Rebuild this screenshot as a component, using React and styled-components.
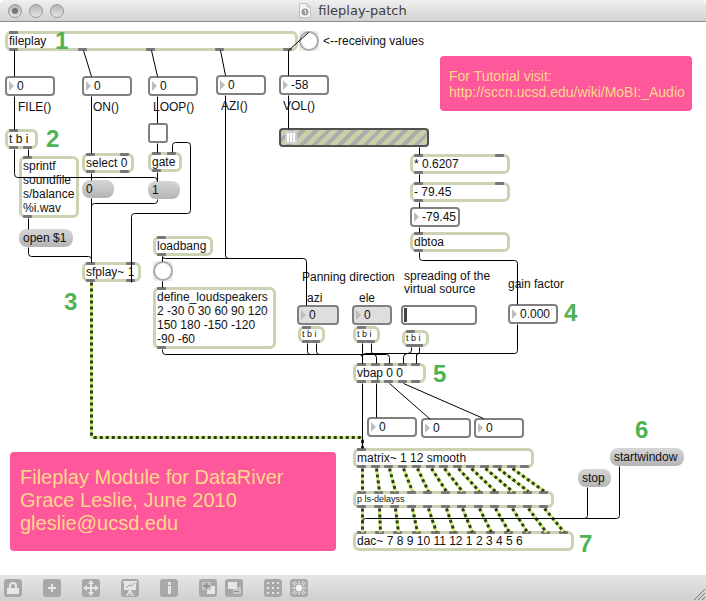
import React from "react";
import styled, { createGlobalStyle } from "styled-components";

const GlobalStyle = createGlobalStyle`
  * { box-sizing: border-box; }
  body {
    margin: 0;
    background: #fff;
    color: #111;
    font: 12px/14px "Liberation Sans", Arial, sans-serif;
  }
  button, input { font: inherit; color: inherit; margin: 0; }
`;

const Window = styled.main`
  display: flex;
  flex-direction: column;
  height: 100vh;
  background: #fff;
`;

const TitleBar = styled.header`
  display: grid;
  grid-template-columns: 1fr auto 1fr;
  align-items: center;
  height: 22px;
  flex: none;
  padding: 0 8px;
  background: linear-gradient(#efefef, #d2d2d2);
  border-bottom: 1px solid #8c8c8c;
  border-radius: 5px 5px 0 0;
`;

const Lights = styled.div`
  display: flex;
  gap: 7px;
`;

const Light = styled.button`
  display: grid;
  place-items: center;
  width: 14px;
  height: 14px;
  padding: 0;
  border: 1px solid #979797;
  border-radius: 50%;
  background: linear-gradient(#b4b4b4, #e6e6e6);

  &::after {
    content: "";
    width: 6px;
    height: 6px;
    border-radius: 50%;
    background: ${(p) => (p.$edited ? "#747474" : "transparent")};
  }
`;

const Title = styled.h1`
  display: flex;
  align-items: center;
  gap: 7px;
  margin: 0;
  color: #3c3c3c;
  font: 13px/20px "DejaVu Sans", sans-serif;
`;

const Canvas = styled.section`
  position: relative;
  flex: 1;
  min-height: 0;
  overflow: auto;
`;

const Cables = styled.svg`
  position: absolute;
  inset: 0;
  width: 100%;
  height: 100%;
  overflow: visible;
  pointer-events: none;
  fill: none;
`;

/* Anything the author of a patch can drag around the canvas. */
const Item = styled.div`
  position: absolute;
  left: ${(p) => p.$x}px;
  top: ${(p) => p.$y}px;
`;

const ObjectBox = styled(Item)`
  width: ${(p) => p.$w}px;
  min-height: ${(p) => (p.$small ? 17 : 20)}px;
  padding: 0 1px;
  border: 3px solid #ccd2b2;
  border-radius: 6px;
  background: #fff;
  font-size: ${(p) => (p.$small ? 9 : 12)}px;
  line-height: ${(p) => (p.$small ? 10 : 14)}px;
  white-space: pre;
`;

const Port = styled.i`
  position: absolute;
  left: ${(p) => p.$x - 8}px;
  ${(p) => (p.$out ? "bottom" : "top")}: -3px;
  width: 9px;
  height: 3px;
  border-radius: 1px;
  background: #777;
`;

const NumberFrame = styled(Item)`
  display: flex;
  align-items: center;
  gap: 3px;
  width: ${(p) => p.$w}px;
  height: 20px;
  padding-left: 2px;
  border: 2px solid #808080;
  border-radius: 4px;
  background: ${(p) => (p.$dim ? "#dedede" : "#fff")};
`;

const Arrow = styled.svg`
  flex: none;
  fill: #bdbdbd;
`;

const NumberInput = styled.input`
  flex: 1;
  min-width: 0;
  height: 14px;
  padding: 0;
  border: 0;
  background: none;
  outline: none;
`;

const Message = styled(Item)`
  width: ${(p) => p.$w}px;
  height: 18px;
  padding: 0 4px;
  border: 0;
  border-radius: 8px;
  background: linear-gradient(#d6d6d6, #b4b4b4);
  line-height: 18px;
  text-align: left;
  white-space: nowrap;
`;

const Bang = styled(Item)`
  display: grid;
  place-items: center;
  width: 20px;
  height: 20px;
  padding: 0;
  border: 0;
  border-radius: 3px;
  background: #ececec;

  &::before {
    content: "";
    width: 16px;
    height: 16px;
    border: 2px solid #aaa;
    border-radius: 50%;
    background: #fff;
  }
`;

const Toggle = styled(Item)`
  appearance: none;
  width: 20px;
  height: 20px;
  margin: 0;
  border: 2px solid #808080;
  border-radius: 3px;
  background: #fff;
`;

const GainSlider = styled(Item)`
  appearance: none;
  width: 150px;
  height: 19px;
  margin: 0;
  padding: 0 4px;
  border: 2px solid #515151;
  border-radius: 4px;
  background: repeating-linear-gradient(135deg, #c9d0a8 0 5px, #adadad 5px 9px);

  &::-webkit-slider-thumb {
    appearance: none;
    width: 12px;
    height: 13px;
    border-radius: 1px;
    background:
      linear-gradient(90deg, transparent 2px, #fff 2px 4px, transparent 4px 5px, #fff 5px 7px, transparent 7px 8px, #fff 8px 10px, transparent 10px)
      0 2px / 12px 9px no-repeat #cfcfcf;
  }
`;

const SpreadSlider = styled(Item)`
  appearance: none;
  width: 76px;
  height: 20px;
  margin: 0;
  padding: 0 1px;
  border: 2px solid #808080;
  border-radius: 4px;
  background: #fff;

  &::-webkit-slider-thumb {
    appearance: none;
    width: 3px;
    height: 14px;
    background: #444;
  }
`;

const Comment = styled(Item)`
  line-height: ${(p) => (p.$tight ? 13 : 14)}px;
  white-space: pre;
`;

const StepNumber = styled(Item)`
  color: #4fb356;
  font-size: 24px;
  font-weight: bold;
  line-height: 24px;
`;

const Panel = styled(Item)`
  width: ${(p) => p.$w}px;
  padding: ${(p) => (p.$large ? "14px 10px 16px" : "12px 9px 11px")};
  border-radius: 4px;
  background: #ff579b;
  color: #fcd98a;
  font-size: ${(p) => (p.$large ? 20 : 14)}px;
  line-height: ${(p) => (p.$large ? 23 : 16)}px;
  white-space: pre;

  a { color: inherit; text-decoration: none; }
`;

const ToolBar = styled.footer`
  display: flex;
  align-items: center;
  flex: none;
  height: 26px;
  padding-left: 4px;
  background: linear-gradient(#e6e6e6, #cfcfcf);
`;

const Tools = styled.nav`
  display: flex;
  flex: 1;
  gap: 21px;
`;

const ToolGroup = styled.div`
  display: flex;
  gap: 8px;
`;

const Tool = styled.button`
  display: block;
  width: 18px;
  height: 18px;
  padding: 0;
  border: 0;
  border-radius: 3px;
  background: #a8a8a8;
  color: #e6e6e6;

  svg { display: block; }
`;

const Grip = styled.svg`
  align-self: flex-end;
  stroke: #777;
`;

const objects = [
  { x: 5, y: 9, w: 293, text: "fileplay", ins: [14], outs: [14, 83, 151, 220, 288] },
  { x: 5, y: 107, w: 33, text: "t b i", ins: [14], outs: [14, 28] },
  { x: 19, y: 134, w: 60, text: "sprintf\nsoundfile\ns/balance\n%i.wav", ins: [28], outs: [28] },
  { x: 82, y: 131, w: 52, text: "select 0", ins: [91, 125], outs: [91, 125] },
  { x: 148, y: 130, w: 34, text: "gate", ins: [157, 172], outs: [157] },
  { x: 82, y: 240, w: 59, text: "sfplay~ 1", ins: [91, 131], outs: [91, 131] },
  { x: 153, y: 214, w: 60, text: "loadbang", ins: [162], outs: [162] },
  { x: 153, y: 265, w: 123, text: "define_loudspeakers\n2 -30 0 30 60 90 120\n150 180 -150 -120\n-90 -60", ins: [162], outs: [162] },
  { x: 410, y: 132, w: 100, text: "* 0.6207", ins: [419, 500], outs: [419] },
  { x: 410, y: 160, w: 100, text: "- 79.45", ins: [419, 500], outs: [419] },
  { x: 410, y: 210, w: 100, text: "dbtoa", ins: [419], outs: [419] },
  { x: 298, y: 304, w: 27, text: "t b i", small: true, ins: [307], outs: [307, 316] },
  { x: 353, y: 304, w: 27, text: "t b i", small: true, ins: [362], outs: [362, 371] },
  { x: 402, y: 308, w: 27, text: "t b i", small: true, ins: [411], outs: [411, 419] },
  { x: 353, y: 341, w: 73, text: "vbap 0 0", ins: [362, 376, 389, 403, 416], outs: [362, 376, 389, 403, 416] },
  { x: 353, y: 426, w: 181, text: "matrix~ 1 12 smooth", ins: [362], outs: [362, 376, 389, 403, 417, 431, 444, 458, 471, 485, 498, 512, 525] },
  { x: 353, y: 469, w: 201, text: "p ls-delayss", small: true, ins: [362, 379, 395, 412, 428, 446, 462, 479, 495, 512, 528, 544], outs: [362, 379, 395, 412, 428, 446, 462, 479, 495, 512, 528, 544] },
  { x: 353, y: 509, w: 221, text: "dac~ 7 8 9 10 11 12 1 2 3 4 5 6", ins: [362, 380, 398, 417, 436, 454, 472, 491, 509, 527, 546, 564], outs: [] },
];

const numbers = [
  { id: "file", x: 5, y: 54, w: 50, value: "0", label: "FILE()", lx: 18, ly: 78 },
  { id: "on", x: 82, y: 54, w: 50, value: "0", label: "ON()", lx: 93, ly: 78 },
  { id: "loop", x: 148, y: 54, w: 50, value: "0", label: "LOOP()", lx: 153, ly: 78 },
  { id: "azimuth", x: 216, y: 53, w: 50, value: "0", label: "AZI()", lx: 221, ly: 77 },
  { id: "volume", x: 279, y: 53, w: 50, value: "-58", label: "VOL()", lx: 283, ly: 77 },
  { id: "decibel", x: 410, y: 185, w: 50, value: "-79.45" },
  { id: "azi", x: 297, y: 283, w: 42, value: "0", dim: true, label: "azi", lx: 307, ly: 269 },
  { id: "ele", x: 352, y: 283, w: 40, value: "0", dim: true, label: "ele", lx: 359, ly: 269 },
  { id: "gain", x: 508, y: 282, w: 50, value: "0.000", label: "gain factor", lx: 508, ly: 255 },
  { id: "vbap-azimuth", x: 367, y: 395, w: 50, value: "0" },
  { id: "vbap-elevation", x: 421, y: 396, w: 50, value: "0" },
  { id: "vbap-spread", x: 474, y: 396, w: 50, value: "0" },
];

const messages = [
  { x: 82, y: 158, w: 32, text: "0" },
  { x: 148, y: 159, w: 32, text: "1" },
  { x: 19, y: 207, w: 54, text: "open $1" },
  { x: 578, y: 447, w: 33, text: "stop" },
  { x: 610, y: 426, w: 74, text: "startwindow" },
];

const steps = [
  [55, 7], [46, 105], [64, 268], [564, 279], [433, 340], [635, 396], [579, 510],
];

const cords = [
  "M14 28V54", "M83 28L91 54", "M151 28L157 54", "M220 28L225 53", "M288 28V53", "M288 28L308 10",
  "M14 74V107", "M91 74V131", "M157 74V101", "M157 121V130", "M288 73V106",
  "M225 73V233Q225 236 228 236", "M162 234Q162 236 165 236H303Q306 236 306 239V283",
  "M162 234V239", "M162 259V265", "M14 127V151Q14 155 17 155H154Q157 155 157 159",
  "M28 127V134", "M28 196V207", "M28 225V231Q28 234 31 234H88Q91 234 91 237V240",
  "M91 151V158", "M91 176V240", "M157 150V159", "M157 177V178Q157 181 154 181H94Q91 181 91 184",
  "M172 130V123Q172 120 175 120H187Q190 120 190 123V188Q190 191 187 191H134Q131 191 131 194V260",
  "M419 125V132", "M419 152V160", "M419 180V185", "M419 205V210",
  "M419 230V235Q419 238 422 238H514Q517 238 517 241V282", "M517 302V328Q517 331 514 331H365Q362 331 362 334V341",
  "M162 327V329Q162 332 165 332H359Q362 332 362 335", "M307 321V329Q307 332 310 332",
  "M316 321V329Q316 332 319 332H373Q376 332 376 335V341", "M362 321V341",
  "M371 321V329Q371 332 374 332H386Q389 332 389 335V341",
  "M411 325V328Q411 331 407 331Q403 331 403 335V341", "M419 325V329Q419 332 416 332V341",
  "M362 361V426", "M376 361V395", "M389 361L430 397", "M403 361L483 396",
  "M587 465V493Q587 496 584 496", "M619 444V493Q619 496 616 496H365Q362 496 362 499",
];

const boxAt = (name) => objects.find((o) => o.text.startsWith(name));
const link = (from, y1, to, y2) => to.map((x, i) => `M${from[i]} ${y1}L${x} ${y2}`);

const signals = [
  "M91 260V412Q91 415 94 415H359Q362 415 362 418V426",
  ...link(boxAt("matrix").outs, 446, boxAt("p ls").ins, 469),
  ...link(boxAt("p ls").outs, 486, boxAt("dac").ins, 510),
];

function PatchObject({ box }) {
  return (
    <ObjectBox $x={box.x} $y={box.y} $w={box.w} $small={box.small}>
      {box.text}
      {box.ins.map((x) => <Port key={`in${x}`} $x={x - box.x} />)}
      {box.outs.map((x) => <Port key={`out${x}`} $x={x - box.x} $out />)}
    </ObjectBox>
  );
}

function NumberBox({ box }) {
  return (
    <>
      {box.label && (
        <Comment as="label" htmlFor={box.id} $x={box.lx} $y={box.ly}>{box.label}</Comment>
      )}
      <NumberFrame $x={box.x} $y={box.y} $w={box.w} $dim={box.dim}>
        <Arrow width="5" height="10" aria-hidden="true"><path d="M0 0L5 5L0 10Z" /></Arrow>
        <NumberInput id={box.id} defaultValue={box.value} aria-label={box.label ? undefined : box.id} />
      </NumberFrame>
    </>
  );
}

const lineProps = { fill: "none", stroke: "currentColor", strokeWidth: 2 };

const toolGroups = [
  [["Lock", <g key="g"><path d="M6 9V7a3 3 0 0 1 6 0v2" {...lineProps} /><path d="M3 9h12v6H3z" fill="currentColor" /></g>]],
  [["New object", <path key="p" d="M9 5v8M5 9h8" {...lineProps} />]],
  [["Move", <g key="g"><path d="M9 4v10M4 9h10" {...lineProps} /><path d="M9 1l3 4H6zM9 17l3-4H6zM1 9l4-3v6zM17 9l-4-3v6z" fill="currentColor" /></g>]],
  [["Presentation", <g key="g"><path d="M2 2h14v2h-1v7H3V4H2zM8 11h2l3 6h-1.500l-2-4v4h-1v-4l-2 4H5z" fill="currentColor" /><path d="M5 9l3-3 2 1 4-3" fill="none" stroke="#a0a0a0" /></g>]],
  [["Inspector", <path key="p" d="M8 3h3v3H8zM8 7h3v8H8z" fill="currentColor" />]],
  [
    ["Bring forward", <g key="g"><path d="M8 7h8v8H8z" fill="currentColor" /><path d="M3 3h9v8H3z" fill="#c6c6c6" /><path d="M7.500 4v6M4 7h7" stroke="#929292" strokeWidth="2" /></g>],
    ["Send back", <g key="g"><path d="M8 8h8v7H8z" fill="#c6c6c6" /><path d="M3 3h9v7H3z" fill="currentColor" /><path d="M9 12.500h5" stroke="#929292" /></g>],
  ],
  [
    ["Grid", <path key="p" d="M3 3h2v2H3zM8 3h2v2H8zM13 3h2v2h-2zM3 8h2v2H3zM8 8h2v2H8zM13 8h2v2h-2zM3 13h2v2H3zM8 13h2v2H8zM13 13h2v2h-2z" fill="currentColor" />],
    ["Snap to grid", <g key="g"><path d="M4.500 2v14M9 2v14M13.500 2v14M2 4.500h14M2 9h14M2 13.500h14" stroke="#d2d2d2" strokeWidth="1.500" strokeDasharray="2 1" /><rect x="6" y="6" width="6" height="6" rx="2" fill="#f4f4f4" /></g>],
  ],
];

export default function App() {
  return (
    <>
      <GlobalStyle />
      <Window>
        <TitleBar>
          <Lights>
            <Light aria-label="Close" $edited />
            <Light aria-label="Minimize" />
            <Light aria-label="Zoom" />
          </Lights>
          <Title>
            <svg width="12" height="15" viewBox="0 0 12 15" aria-hidden="true">
              <path d="M.5.5H8L11.500 4V14.500H.5Z" fill="#f5f5f5" stroke="#c0c0c0" />
              <path d="M8 .5V4h3.500" fill="#ddd" stroke="#c0c0c0" />
              <circle cx="6" cy="9" r="3.500" fill="#999" />
              <path d="M5 7.500h1.500V11" fill="none" stroke="#eee" />
            </svg>
            fileplay-patch
          </Title>
        </TitleBar>

        <Canvas aria-label="Patch">
          <Panel $x={440} $y={34} $w={252}>
            For Tutorial visit:{"\n"}
            <a href="http://sccn.ucsd.edu/wiki/MoBI:_Audio">http://sccn.ucsd.edu/wiki/MoBI:_Audio</a>
          </Panel>
          <Panel $x={10} $y={430} $w={326} $large>
            {"Fileplay Module for DataRiver\nGrace Leslie, June 2010\ngleslie@ucsd.edu"}
          </Panel>

          {objects.map((box) => <PatchObject key={`${box.x}-${box.y}`} box={box} />)}
          {numbers.map((box) => <NumberBox key={box.id} box={box} />)}
          {messages.map((m) => (
            <Message as="button" key={m.text} $x={m.x} $y={m.y} $w={m.w}>{m.text}</Message>
          ))}

          <Bang as="button" aria-label="Receive values" $x={299} $y={9} />
          <Bang as="button" aria-label="Define loudspeakers" $x={153} $y={239} />
          <Toggle as="input" type="checkbox" aria-label="Loop" $x={148} $y={101} />
          <GainSlider as="input" type="range" defaultValue="0" aria-label="Volume level" $x={279} $y={106} />
          <SpreadSlider as="input" type="range" defaultValue="0" id="spread" $x={401} $y={283} />

          <Comment $x={323} $y={12}>{"<--receiving values"}</Comment>
          <Comment $x={302} $y={248}>Panning direction</Comment>
          <Comment as="label" htmlFor="spread" $x={404} $y={248} $tight>{"spreading of the\nvirtual source"}</Comment>

          {steps.map(([x, y], i) => <StepNumber key={x} $x={x} $y={y}>{i + 1}</StepNumber>)}

          <Cables aria-hidden="true">
            <g transform="translate(.5 .5)">
              <path d={signals.join("")} stroke="#cdf07a" strokeWidth="3" />
              {signals.map((d) => (
                <path key={d} d={d} stroke="#2f3d1c" strokeWidth="3" strokeDasharray="3 3" />
              ))}
              <path d={cords.join("")} stroke="#000" />
            </g>
          </Cables>
        </Canvas>

        <ToolBar>
          <Tools>
            {toolGroups.map((group) => (
              <ToolGroup key={group[0][0]}>
                {group.map(([name, drawing]) => (
                  <Tool key={name} aria-label={name}>
                    <svg width="18" height="18" viewBox="0 0 18 18">{drawing}</svg>
                  </Tool>
                ))}
              </ToolGroup>
            ))}
          </Tools>
          <Grip width="14" height="14" aria-hidden="true">
            <path d="M2 13L13 2M6 13L13 6M10 13L13 10" />
          </Grip>
        </ToolBar>
      </Window>
    </>
  );
}
